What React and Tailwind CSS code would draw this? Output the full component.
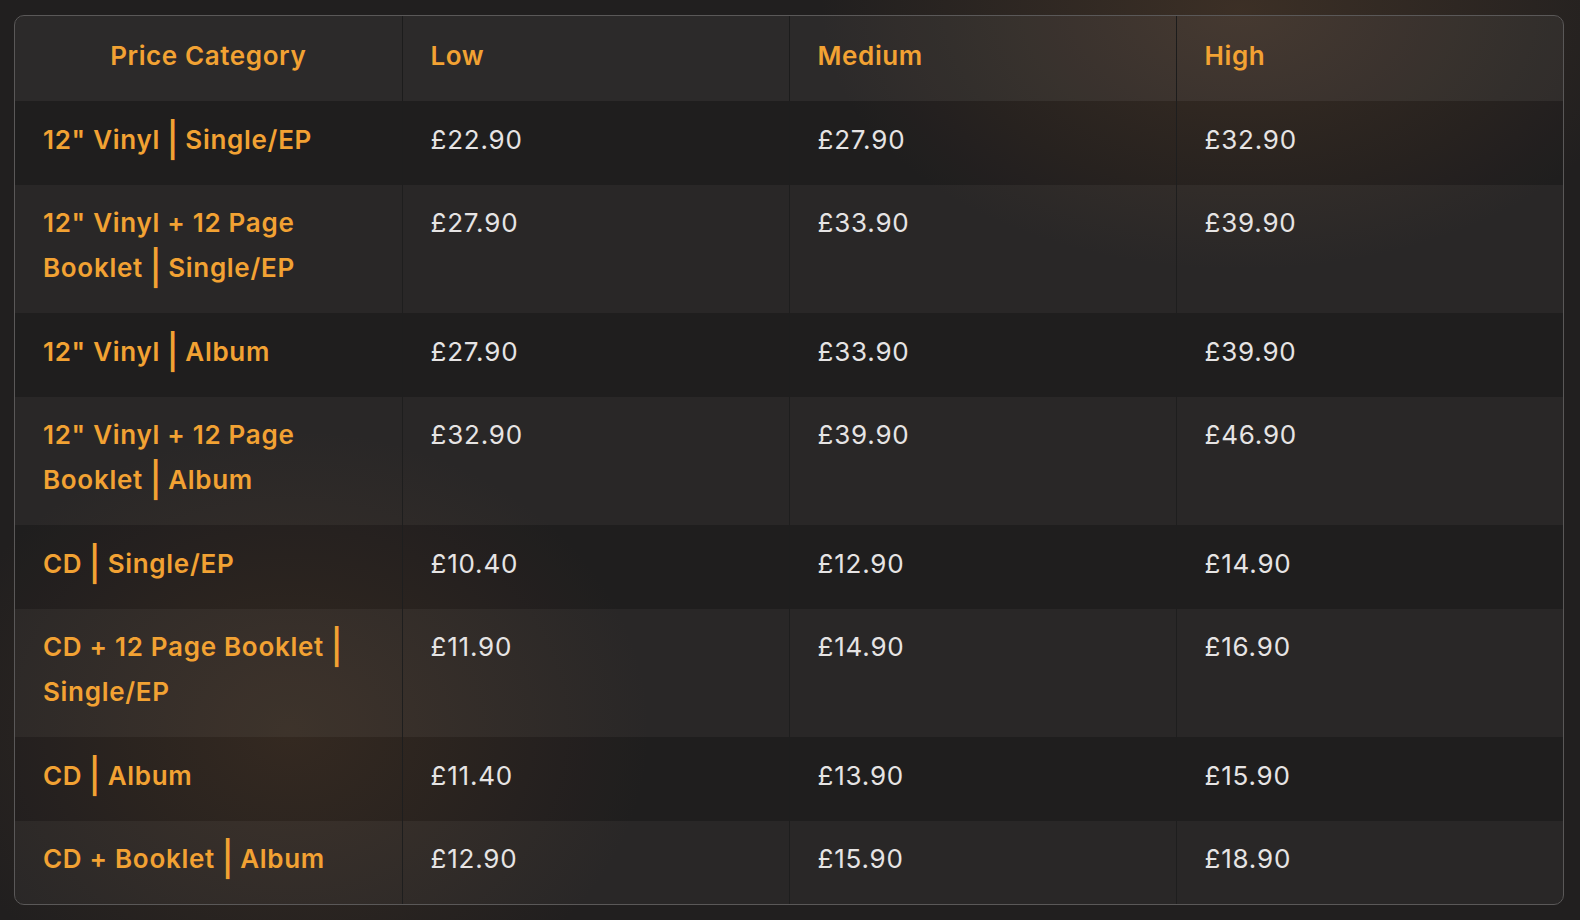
import React from "react";

const rows = [
  [["12\" Vinyl", "Single/EP"], "£22.90", "£27.90", "£32.90"],
  [["12\" Vinyl + 12 Page Booklet", "Single/EP"], "£27.90", "£33.90", "£39.90"],
  [["12\" Vinyl", "Album"], "£27.90", "£33.90", "£39.90"],
  [["12\" Vinyl + 12 Page Booklet", "Album"], "£32.90", "£39.90", "£46.90"],
  [["CD", "Single/EP"], "£10.40", "£12.90", "£14.90"],
  [["CD + 12 Page Booklet", "Single/EP"], "£11.90", "£14.90", "£16.90"],
  [["CD", "Album"], "£11.40", "£13.90", "£15.90"],
  [["CD + Booklet", "Album"], "£12.90", "£15.90", "£18.90"],
];

function Label({ parts }) {
  return (
    <span>
      {parts[0]}
      <span className="inline-block ml-[8px] scale-y-[1.32] scale-x-[1.15] font-semibold">|</span>
      {" "}
      {parts[1]}
    </span>
  );
}

const cell = "pt-[15.5px] pb-[23px] px-[28px] align-top";

export default function App() {
  return (
    <div
      className="w-[1580px] h-[920px] overflow-hidden bg-[#211f1f] pt-[15px] pl-[14px] pr-[16px] bg-[radial-gradient(ellipse_420px_260px_at_1240px_10px,rgba(110,78,50,0.35),transparent),radial-gradient(ellipse_360px_300px_at_290px_730px,rgba(110,75,45,0.28),transparent)]"
      style={{ fontFamily: "Inter, 'Open Sans', sans-serif" }}
    >
      <div className="rounded-[10px] border border-[#5a5858] overflow-hidden">
        <table className="w-full table-fixed border-collapse text-[26px] leading-[45px]">
          <thead>
            <tr className="bg-[rgba(255,255,255,0.05)]">
              <th className="pt-[17px] pb-[23px] px-[28px] text-center font-semibold tracking-[0.6px] text-[#f2a233] border-r border-[#1c1c1c]">Price Category</th>
              <th className="pt-[17px] pb-[23px] px-[28px] text-left font-semibold tracking-[0.6px] text-[#f2a233] border-r border-[#1c1c1c]">Low</th>
              <th className="pt-[17px] pb-[23px] px-[28px] text-left font-semibold tracking-[0.6px] text-[#f2a233] border-r border-[#1c1c1c]">Medium</th>
              <th className="pt-[17px] pb-[23px] px-[28px] text-left font-semibold tracking-[0.6px] text-[#f2a233]">High</th>
            </tr>
          </thead>
          <tbody>
            {rows.map((r, i) => (
              <tr key={i} className={i % 2 === 0 ? "bg-[rgba(0,0,0,0.03)]" : "bg-[rgba(255,255,255,0.04)]"}>
                <td className={`${cell} font-semibold tracking-[0.7px] text-[#f2a233] border-r border-[#1e1e1e]`}>
                  <Label parts={r[0]} />
                </td>
                <td className={`${cell} tracking-[0.8px] text-[#e6e4e4] border-r border-[#1e1e1e]`}>{r[1]}</td>
                <td className={`${cell} tracking-[0.8px] text-[#e6e4e4] border-r border-[#1e1e1e]`}>{r[2]}</td>
                <td className={`${cell} tracking-[0.8px] text-[#e6e4e4]`}>{r[3]}</td>
              </tr>
            ))}
          </tbody>
        </table>
      </div>
    </div>
  );
}
